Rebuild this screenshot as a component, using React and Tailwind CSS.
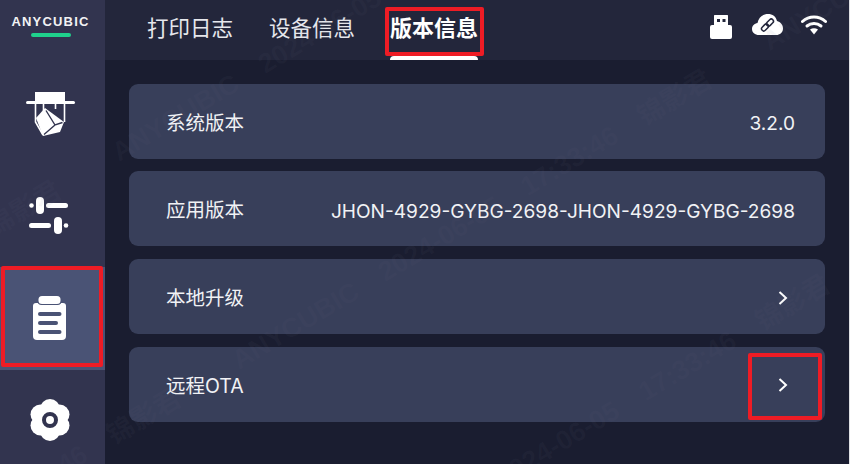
const cjk = "font-['Inter','Noto_Sans_CJK_SC',sans-serif]";

function Nozzle() {
  return (
    <svg width="50" height="46" viewBox="26 92 50 46" className="block">
      <rect x="35" y="92" width="30" height="10" fill="#fff" />
      <rect x="26" y="101" width="49" height="3" rx="1.5" fill="#fff" />
      <path d="M35.500 103V122L43 135M64.500 103V122M43.500 103V111M55.500 103V109" stroke="#fff" strokeWidth="1.6" fill="none" />
      <path d="M36 118L45 108L64 122L60 132L43 136Z" fill="#fff" />
      <path d="M46 110.500L55 125L62.500 122.500M55 125L44 134.500" stroke="#32344f" strokeWidth="1.4" fill="none" />
    </svg>
  );
}

function Sliders() {
  return (
    <svg width="40" height="37" viewBox="29 197 40 37" className="block">
      <circle cx="31.500" cy="205.500" r="2.300" fill="#fff" />
      <rect x="36" y="197" width="8" height="17" rx="4" fill="#fff" />
      <rect x="46" y="203" width="22" height="5" rx="2.500" fill="#fff" />
      <rect x="29" y="223" width="22" height="5" rx="2.500" fill="#fff" />
      <rect x="54" y="217" width="8" height="17" rx="4" fill="#fff" />
      <circle cx="66" cy="225.500" r="2.300" fill="#fff" />
    </svg>
  );
}

function Clipboard() {
  return (
    <svg width="33" height="45" viewBox="33 295 33 45" className="block">
      <path d="M36 302H63Q66 302 66 305V335Q66 339 62 339H37Q33 339 33 335V305Q33 302 36 302Z" fill="#fff" />
      <rect x="37" y="294" width="25" height="10" rx="4.500" fill="#4a5375" />
      <rect x="38.500" y="295" width="22" height="8" rx="3.500" fill="#fff" />
      <rect x="38" y="311" width="23.500" height="4" rx="2" fill="#4a5375" />
      <rect x="38" y="320" width="20" height="4" rx="2" fill="#4a5375" />
      <rect x="38" y="329" width="23.500" height="4" rx="2" fill="#4a5375" />
    </svg>
  );
}

function Flower() {
  return (
    <svg width="40" height="42" viewBox="-20 -21 40 42" className="block">
      <g fill="#fff">
        <circle cx="0" cy="-11" r="10" />
        <circle cx="9.500" cy="-5.500" r="10" />
        <circle cx="9.500" cy="5.500" r="10" />
        <circle cx="0" cy="11" r="10" />
        <circle cx="-9.500" cy="5.500" r="10" />
        <circle cx="-9.500" cy="-5.500" r="10" />
        <circle cx="0" cy="0" r="12" />
      </g>
      <circle cx="0" cy="0" r="6" fill="none" stroke="#32344f" strokeWidth="4" />
    </svg>
  );
}

function Usb() {
  return (
    <svg width="22" height="24" viewBox="0 0 22 24" className="block">
      <path d="M4.500 0H17.500Q18 0 18 1V11H4V1Q4 0 4.500 0Z" fill="#fff" />
      <rect x="7" y="4" width="3" height="3" fill="#23263b" />
      <rect x="12.500" y="4" width="3" height="3" fill="#23263b" />
      <path d="M2 10H20Q22 10 22 12V22Q22 24 20 24H2Q0 24 0 22V12Q0 10 2 10Z" fill="#fff" />
    </svg>
  );
}

function CloudLink() {
  return (
    <svg width="31" height="21" viewBox="0 0 31 21" className="block">
      <path d="M7 21C3 21 0 18.500 0 15C0 11.500 2.500 9.500 5.500 9C6.500 3.500 11 0 16 0C20.500 0 24 2.500 25 7C28.500 8 31 10.500 31 14.500C31 18.500 28 21 24 21Z" fill="#fff" />
      <g stroke="#23263b" strokeWidth="1.500" fill="none" transform="rotate(-45 15.500 11)">
        <rect x="8" y="8.800" width="8" height="4.400" rx="2.200" />
        <rect x="15" y="8.800" width="8" height="4.400" rx="2.200" />
      </g>
    </svg>
  );
}

function Wifi() {
  return (
    <svg width="26" height="21" viewBox="0 0 26 21" className="block">
      <path d="M1.500 7.500C8 1.500 18 1.500 24.500 7.500" stroke="#fff" strokeWidth="3" fill="none" strokeLinecap="round" />
      <path d="M6 12C10 8.700 16 8.700 20 12" stroke="#fff" strokeWidth="3" fill="none" strokeLinecap="round" />
      <path d="M9 15.500C11.500 13.800 14.500 13.800 17 15.500L13 20.500Z" fill="#fff" />
    </svg>
  );
}

function Chevron() {
  return (
    <svg width="10" height="14" viewBox="0 0 10 14" className="block">
      <path d="M1.500 1L8 7L1.500 13" stroke="#fff" strokeWidth="2" fill="none" />
    </svg>
  );
}

function Row({ label, value, arrow, marked }) {
  return (
    <div className="relative flex h-[75px] items-center justify-between rounded-[9px] bg-[#383f5a] pl-[37px] pr-[30px] pt-[4px] text-[#f1f2f5]">
      <span className="text-[19.500px]">{label}</span>
      {value && <span className="text-[19.100px]">{value}</span>}
      {arrow && <span className="mr-[7px] -mt-[2px]"><Chevron /></span>}
      {marked && <span className="absolute bottom-[2px] right-[3px] h-[67px] w-[74px] rounded-[2px] border-[4px] border-[#ee1c25]" />}
    </div>
  );
}

function WatermarkText() {
  return (
    <span className="flex w-[554px] shrink-0 justify-between">
      <span>ANYCUBIC</span>
      <span>2024-06-05</span>
      <span>17:33:46</span>
      <span>锦影君</span>
    </span>
  );
}

function WatermarkLine({ className }) {
  return (
    <div className={"absolute flex origin-left -rotate-[31deg] gap-[65px] whitespace-pre font-['Liberation_Sans','Noto_Sans_CJK_SC',sans-serif] text-[27px] font-bold leading-none text-[#6a6d80]/[0.07] " + className}>
      <WatermarkText />
      <WatermarkText />
      <WatermarkText />
    </div>
  );
}

export default function App() {
  return (
    <div className={"relative flex h-[464px] w-[850px] overflow-hidden border-r border-[#dfe0e4] bg-[#1a1d30] " + cjk}>
      <aside className="flex w-[105px] shrink-0 flex-col bg-[#32344f]">
        <div className="flex h-[61px] shrink-0 flex-col items-center pr-[4px] pt-[14px]">
          <span className="font-['Liberation_Sans',sans-serif] text-[13px] font-bold leading-[15px] tracking-[1.200px] text-[#f2f2f4]">ANYCUBIC</span>
          <span className="mt-[4px] h-[4px] w-[40px] rounded-[2px] bg-[#1fd18c]" />
        </div>
        <div className="flex h-[103px] shrink-0 items-center justify-center pr-[4px] pt-[4px]"><Nozzle /></div>
        <div className="flex h-[103px] shrink-0 items-center justify-center pr-[8px]"><Sliders /></div>
        <div className="relative flex h-[103px] shrink-0 items-center justify-center bg-[#4a5375] pr-[6px] pb-[1px]">
          <Clipboard />
          <span className="absolute -top-[1px] bottom-[3px] left-[1px] right-[2px] rounded-[2px] border-[4px] border-[#ee1c25]" />
        </div>
        <div className="flex h-[103px] shrink-0 items-center justify-center pb-[4px] pr-[6px]"><Flower /></div>
      </aside>
      <main className="flex min-w-0 flex-1 flex-col">
        <header className="flex h-[60px] shrink-0 items-center bg-[#23263b] pl-[42px] pr-[22px]">
          <span className="mb-[4px] text-[21.500px] text-[#e6e7ec]">打印日志</span>
          <span className="mb-[4px] ml-[36px] text-[21.500px] text-[#e6e7ec]">设备信息</span>
          <span className="relative ml-[35px] flex h-[60px] w-[88px] items-center justify-center pb-[4px] text-[22px] font-bold text-white">
            版本信息
            <span className="absolute bottom-0 left-0 h-[4px] w-[88px] rounded-t-[4px] bg-white" />
            <span className="absolute -left-[5px] top-[7px] h-[49px] w-[99px] rounded-[2px] border-[4px] border-[#ee1c25]" />
          </span>
          <div className="ml-auto flex items-center">
            <span className="mt-[-6px]"><Usb /></span>
            <span className="ml-[20px] mt-[-12px]"><CloudLink /></span>
            <span className="ml-[18px] mt-[-12px]"><Wifi /></span>
          </div>
        </header>
        <div className="flex flex-col gap-[12.670px] pl-[24px] pr-[24px] pt-[23.750px]">
          <Row label="系统版本" value="3.2.0" />
          <Row label="应用版本" value="JHON-4929-GYBG-2698-JHON-4929-GYBG-2698" />
          <Row label="本地升级" arrow />
          <Row label="远程OTA" arrow marked />
        </div>
      </main>
      <div className="pointer-events-none absolute inset-0 overflow-hidden">
        <WatermarkLine className="left-[-416px] top-[460px]" />
        <WatermarkLine className="left-[-296px] top-[668px]" />
        <WatermarkLine className="left-[-178px] top-[873px]" />
      </div>
    </div>
  );
}
